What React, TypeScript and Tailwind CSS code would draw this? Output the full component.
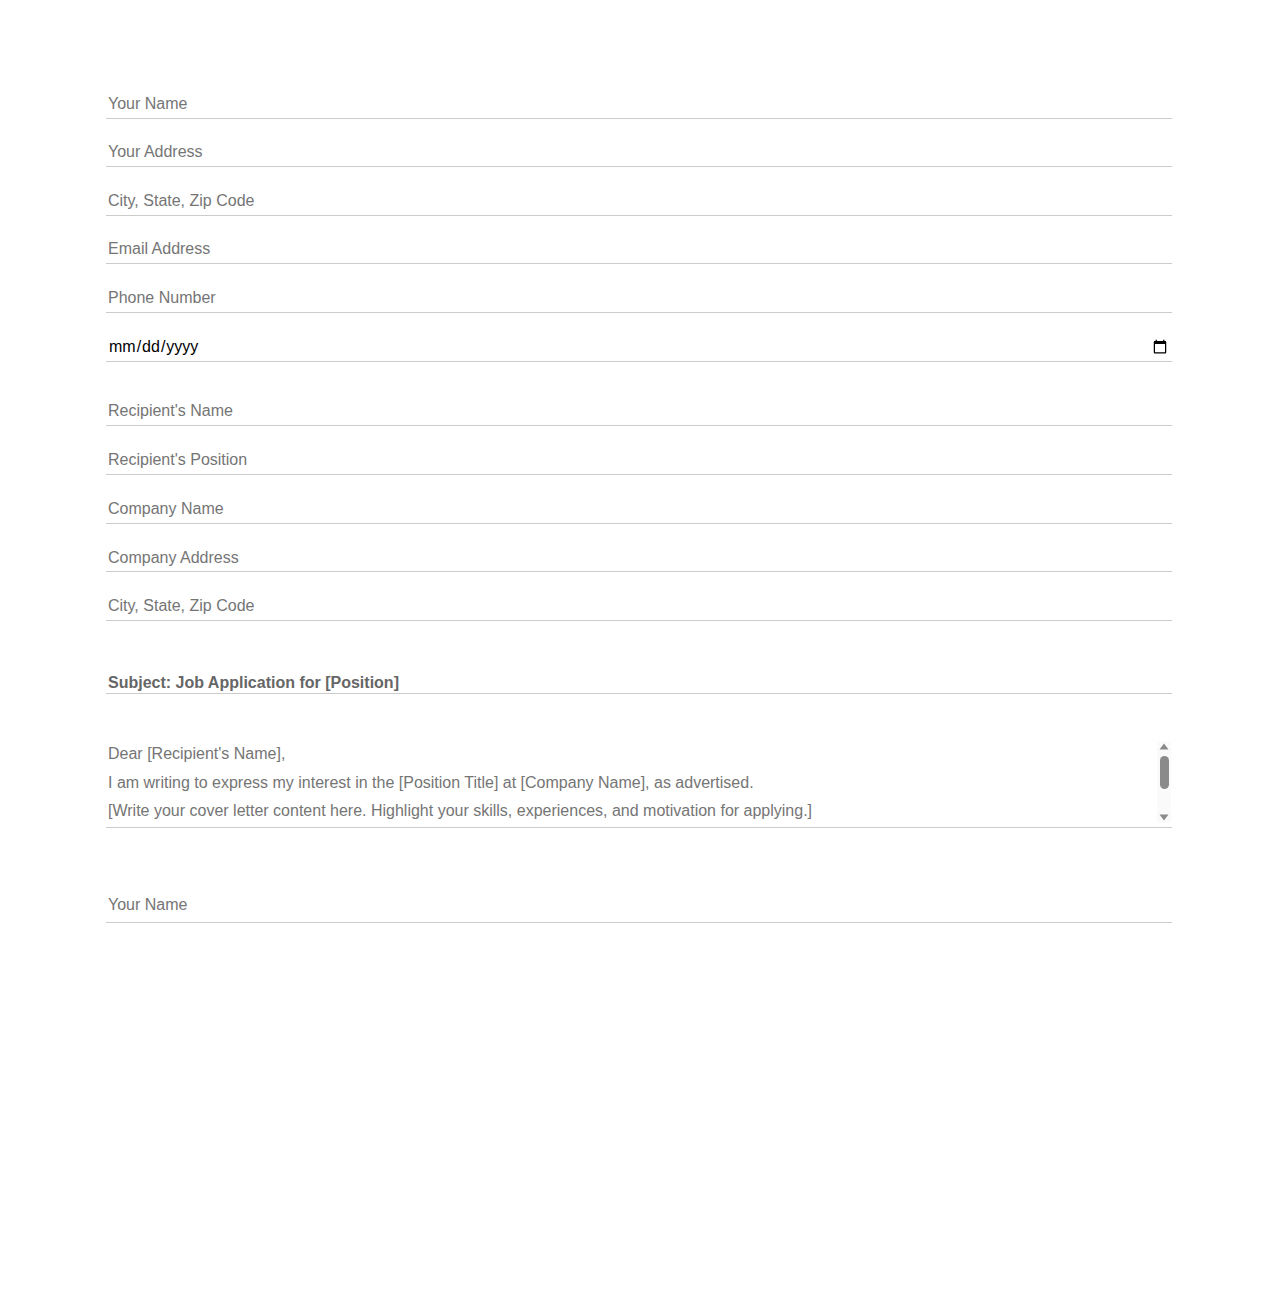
import { useState } from "react";

const field =
  "block w-full h-[32.5px] px-[2px] pt-[4px] pb-0 border-0 border-b border-[#cccccc] bg-transparent outline-none text-[16px] text-black placeholder:text-[#757575]";

export default function App() {
  const [body, setBody] = useState(
    "Dear [Recipient's Name],\nI am writing to express my interest in the [Position Title] at [Company Name], as advertised.\n[Write your cover letter content here. Highlight your skills, experiences, and motivation for applying.]\n\nThank you for considering my application.\nSincerely,"
  );

  return (
    <div className="min-h-[1300px] bg-white font-['Liberation_Sans',Arial,sans-serif]">
      <div className="w-[1066px] mx-auto pt-[86px] flex flex-col">
        {/* sender */}
        <input className={`${field} mb-4`} placeholder="Your Name" />
        <input className={`${field} mb-4`} placeholder="Your Address" />
        <input className={`${field} mb-4`} placeholder="City, State, Zip Code" />
        <input className={`${field} mb-4`} placeholder="Email Address" />
        <input className={`${field} mb-4`} placeholder="Phone Number" />
        <input
          type="date"
          className="block w-full h-[33.5px] px-[2px] pt-[4px] pb-0 border-0 border-b border-[#cccccc] outline-none text-[16px] text-black mb-[31.5px]"
        />

        {/* recipient */}
        <input className={`${field} mb-[16.3px]`} placeholder="Recipient's Name" />
        <input className={`${field} mb-[16.3px]`} placeholder="Recipient's Position" />
        <input className={`${field} mb-[16.3px]`} placeholder="Company Name" />
        <input className={`${field} mb-[16.3px]`} placeholder="Company Address" />
        <input className={`${field} mb-[49px]`} placeholder="City, State, Zip Code" />

        <input
          className="block w-full h-[24px] px-[2px] pt-[2px] pb-0 border-0 border-b border-[#cccccc] outline-none text-[16px] font-bold text-[#666666] mb-[45px]"
          defaultValue="Subject: Job Application for [Position]"
        />

        <div className="relative mb-[62.5px]">
          <textarea
            className="block w-full h-[89px] pl-[2px] pr-[16px] pt-[1px] pb-0 border-0 border-b border-[#cccccc] outline-none resize-none overflow-y-scroll [scrollbar-width:none] [&::-webkit-scrollbar]:hidden text-[16px] leading-[28.5px] text-[#757575]"
            value={body}
            onChange={(e) => setBody(e.target.value)}
          />
          {/* scrollbar */}
          <div className="pointer-events-none absolute right-[1px] top-[2px] bottom-[5px] w-[14px] bg-[#fafafa] flex flex-col items-center">
            <svg width="10" height="7" viewBox="0 0 10 7" className="mt-[2px]">
              <path d="M5 0.5 L9.5 6.5 L0.5 6.5 Z" fill="#8a8a8a" />
            </svg>
            <div className="mt-[6px] w-[9px] h-[33px] rounded-full bg-[#8a8a8a]" />
            <div className="flex-1" />
            <svg width="10" height="7" viewBox="0 0 10 7" className="mb-[2px]">
              <path d="M0.5 0.5 L9.5 0.5 L5 6.5 Z" fill="#8a8a8a" />
            </svg>
          </div>
        </div>

        <input
          className="block w-full h-[32.5px] px-[2px] pt-0 pb-[2px] border-0 border-b border-[#cccccc] outline-none text-[16px] placeholder:text-[#757575]"
          placeholder="Your Name"
        />
      </div>
    </div>
  );
}
